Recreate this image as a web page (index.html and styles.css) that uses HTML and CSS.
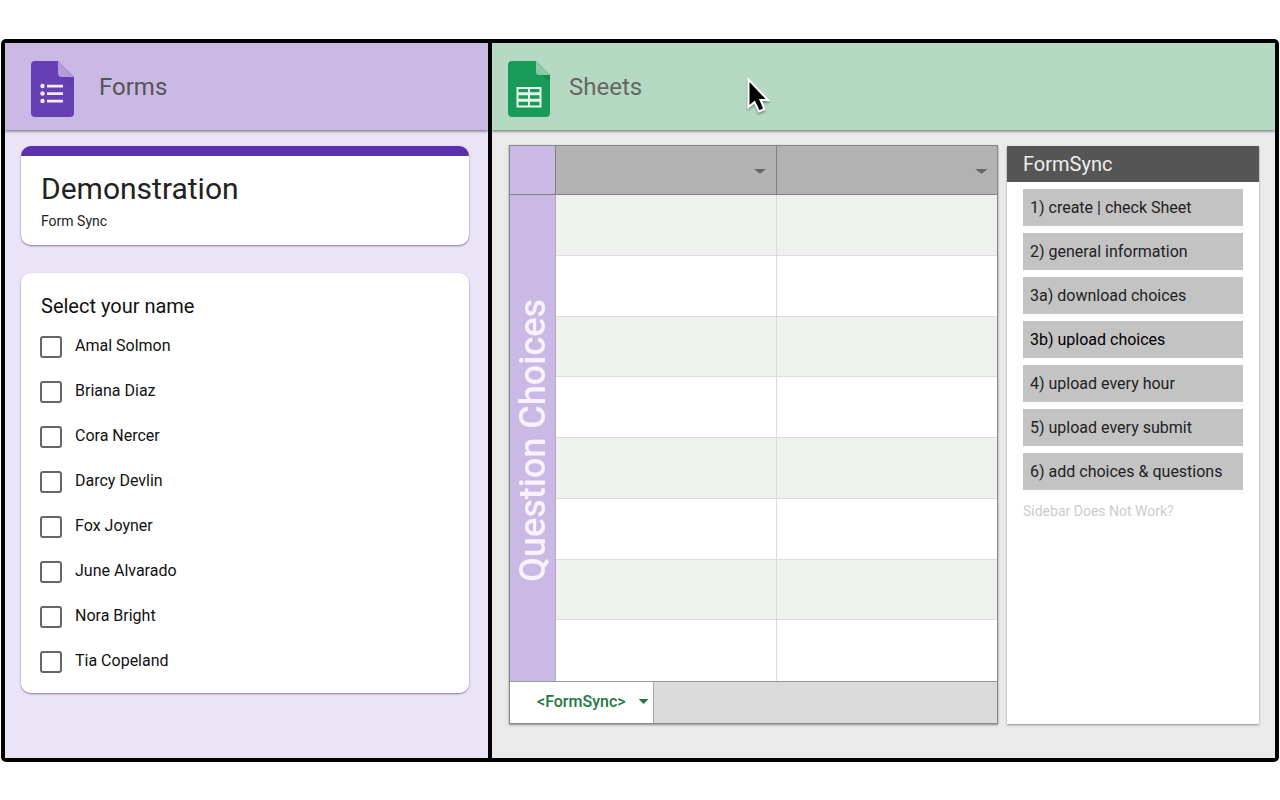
FILE: index.html
```html
<!DOCTYPE html>
<html lang="en">
<head>
  <meta charset="UTF-8">
  <meta name="viewport" content="width=device-width, initial-scale=1.0">
  <title>FormSync</title>
  <link rel="stylesheet" href="styles.css">
</head>
<body>
  <main class="frame">
    <section class="panel forms">
      <header class="panel-header forms-header">
        <svg class="logo" width="43" height="56" viewBox="0 0 43 56" aria-hidden="true">
          <path fill="#673fb4" d="M4 0H27L43 16V52a4 4 0 0 1-4 4H4a4 4 0 0 1-4-4V4a4 4 0 0 1 4-4z"/>
          <path fill="#5a36a0" d="M28 15L43 30V16z" opacity=".3"/>
          <path fill="#b39ddb" d="M27 0L43 16H31a4 4 0 0 1-4-4z"/>
          <g fill="#f1ebfa">
            <circle cx="11.500" cy="25" r="2.200"/>
            <circle cx="11.500" cy="32.500" r="2.200"/>
            <circle cx="11.500" cy="40" r="2.200"/>
            <path d="M16 23.700h16v2.700H16zM16 31.200h16v2.700H16zM16 38.700h16v2.700H16z"/>
          </g>
        </svg>
        <h2>Forms</h2>
      </header>

      <div class="forms-body">
        <div class="card card-title">
          <h1>Demonstration</h1>
          <p>Form Sync</p>
        </div>

        <fieldset class="card card-question">
          <legend>Select your name</legend>
          <label class="choice"><input type="checkbox"><span>Amal Solmon</span></label>
          <label class="choice"><input type="checkbox"><span>Briana Diaz</span></label>
          <label class="choice"><input type="checkbox"><span>Cora Nercer</span></label>
          <label class="choice"><input type="checkbox"><span>Darcy Devlin</span></label>
          <label class="choice"><input type="checkbox"><span>Fox Joyner</span></label>
          <label class="choice"><input type="checkbox"><span>June Alvarado</span></label>
          <label class="choice"><input type="checkbox"><span>Nora Bright</span></label>
          <label class="choice"><input type="checkbox"><span>Tia Copeland</span></label>
        </fieldset>
      </div>
    </section>

    <section class="panel sheets">
      <header class="panel-header sheets-header">
        <svg class="logo" width="42" height="56" viewBox="0 0 42 56" aria-hidden="true">
          <path fill="#189a58" d="M4 0H28L42 14V52a4 4 0 0 1-4 4H4a4 4 0 0 1-4-4V4a4 4 0 0 1 4-4z"/>
          <path fill="#12804a" d="M33 14L42 20V14z" opacity=".7"/>
          <path fill="#8bcaa9" d="M28 0L42 14H31a3 3 0 0 1-3-3z"/>
          <path fill="#e6f4ea" fill-rule="evenodd" d="M8.500 26H33.500V46.500H8.500zM10.500 28V31.300H20V28zM22 28V31.300H31.500V28zM10.500 34.300V37.700H20V34.300zM22 34.300V37.700H31.500V34.300zM10.500 40.700V44.500H20V40.700zM22 40.700V44.500H31.500V40.700z"/>
        </svg>
        <h2>Sheets</h2>
      </header>

      <div class="sheets-body">
        <div class="sheet">
          <table class="grid">
            <colgroup>
              <col class="col-label">
              <col>
              <col>
            </colgroup>
            <thead>
              <tr>
                <th class="corner"></th>
                <th class="column-head"><button class="arrow" aria-label="Column menu"></button></th>
                <th class="column-head"><button class="arrow" aria-label="Column menu"></button></th>
              </tr>
            </thead>
            <tbody>
              <tr>
                <th class="row-label" rowspan="8"><span>Question Choices</span></th>
                <td></td>
                <td></td>
              </tr>
              <tr><td></td><td></td></tr>
              <tr><td></td><td></td></tr>
              <tr><td></td><td></td></tr>
              <tr><td></td><td></td></tr>
              <tr><td></td><td></td></tr>
              <tr><td></td><td></td></tr>
              <tr><td></td><td></td></tr>
            </tbody>
          </table>
          <div class="tabs">
            <button class="tab">&lt;FormSync&gt;</button>
          </div>
        </div>

        <aside class="sidebar">
          <h3>FormSync</h3>
          <nav class="actions">
            <button>1) create | check Sheet</button>
            <button>2) general information</button>
            <button>3a) download choices</button>
            <button class="active">3b) upload choices</button>
            <button>4) upload every hour</button>
            <button>5) upload every submit</button>
            <button>6) add choices &amp; questions</button>
            <a href="#">Sidebar Does Not Work?</a>
          </nav>
        </aside>
      </div>

      <svg class="cursor" width="26" height="40" viewBox="0 0 26 40" aria-hidden="true">
        <path fill="#000" stroke="#fff" stroke-width="2" d="M1.500 2.500V30L7.500 25L12 34.500L17.500 32L13.500 23H21z"/>
      </svg>
    </section>
  </main>
</body>
</html>
```
FILE: styles.css
```css
* {
  box-sizing: border-box;
}

body {
  margin: 0;
  padding: 39px 1px;
  background-color: #fff;
  font-family: Roboto, sans-serif;
  color: #111;
}

h1, h2, h3, p {
  margin: 0;
  font-weight: 400;
}

button {
  border: none;
  font-family: inherit;
  cursor: pointer;
}

.frame {
  display: grid;
  grid-template-columns: 487fr 783fr;
  border: 4px solid #000;
  border-radius: 5px;
}

.panel {
  display: flex;
  flex-direction: column;
  position: relative;
}

.forms {
  border-right: 4px solid #000;
  background-color: #ebe4f7;
}

.sheets {
  background-color: #eaeaea;
}

.panel-header {
  display: flex;
  align-items: center;
  padding: 18px 26px 13px;
  box-shadow: 0 1px 3px rgba(0, 0, 0, 0.6);
}

.panel-header h2 {
  padding-bottom: 4px;
  font-size: 24px;
  line-height: 30px;
}

.forms-header {
  gap: 25px;
  background-color: #cab9e4;
}

.forms-header h2 {
  color: #555;
}

.sheets-header {
  gap: 19px;
  padding-left: 16px;
  background-color: #b5d9c3;
}

.sheets-header h2 {
  color: #666;
}

/* forms */

.forms-body {
  display: flex;
  flex-direction: column;
  gap: 28px;
  padding: 16px 19px 16px 16px;
}

.card {
  margin: 0;
  border: none;
  border-radius: 10px;
  background-color: #fff;
  box-shadow: 0 1px 2px rgba(60, 40, 90, 0.6);
}

.card-title {
  padding: 15px 20px 13px;
  border-top: 10px solid #5a30ad;
}

.card-title h1 {
  font-size: 30px;
  line-height: 36px;
  color: #222;
}

.card-title p {
  margin-top: 4px;
  font-size: 14px;
  line-height: 21px;
  color: #222;
}

.card-question {
  display: flex;
  flex-direction: column;
  padding: 20px 19px 9px;
}

.card-question legend {
  float: left;
  padding: 0 1px;
  font-size: 20px;
  line-height: 26px;
  margin-bottom: 5px;
}

.choice {
  display: flex;
  align-items: center;
  gap: 13px;
  height: 45px;
  font-size: 16px;
}

.choice input {
  appearance: none;
  width: 22px;
  height: 22px;
  margin: 0;
  border: 2px solid #666;
  border-radius: 3px;
}

.choice input:checked {
  background-color: #673fb4;
}

.choice span {
  padding-bottom: 2px;
}

/* sheets */

.sheets-body {
  display: grid;
  grid-template-columns: 489fr 252fr;
  gap: 9px;
  flex: 1;
  padding: 15px 16px 34px 17px;
}

.sheet {
  display: flex;
  flex-direction: column;
  border: 1px solid #888;
  box-shadow: 0 1px 2px rgba(0, 0, 0, 0.4);
}

.grid {
  width: 100%;
  height: 535px;
  table-layout: fixed;
  border-spacing: 0;
  background-color: #fff;
}

.grid th,
.grid td {
  padding: 0;
}

.col-label {
  width: 46px;
}

.grid .corner,
.grid .column-head {
  height: 49px;
  border-right: 1px solid #808080;
  border-bottom: 1px solid #808080;
}

.corner,
.row-label {
  background-color: #cab9e4;
}

.column-head {
  background-color: #b2b2b2;
  text-align: right;
}

.grid .column-head:last-child {
  border-right: none;
}

.arrow {
  width: 13px;
  height: 5px;
  margin-right: 9px;
  padding: 0;
  vertical-align: middle;
  background-color: #666;
  clip-path: polygon(0 0, 100% 0, 50% 100%);
}

.grid .row-label {
  padding-top: 8px;
  border-right: 1px solid #b0a8bd;
}

.row-label span {
  writing-mode: vertical-rl;
  transform: rotate(180deg);
  font-size: 36px;
  font-weight: 500;
  line-height: 44px;
  white-space: nowrap;
  color: #f7f2fc;
}

.grid td {
  height: 60px;
  border-right: 1px solid #dcdcdc;
  border-bottom: 1px solid #dcdcdc;
}

.grid td:last-child {
  border-right: none;
}

.grid tr:last-child td {
  border-bottom: none;
}

.grid tbody tr:nth-child(odd) td {
  background-color: #eff1ee;
}

.tabs {
  display: flex;
  height: 42px;
  border-top: 1px solid #999;
  background-color: #dadada;
}

.tab {
  display: flex;
  align-items: center;
  gap: 13px;
  padding: 0 4px 2px 27px;
  border-right: 1px solid #aaa;
  background-color: #fff;
  color: #23783f;
  font-size: 16px;
  font-weight: 500;
}

.tab::after {
  content: "";
  width: 10px;
  height: 5px;
  background-color: #23783f;
  clip-path: polygon(0 0, 100% 0, 50% 100%);
}

.sidebar {
  margin-top: 1px;
  background-color: #fff;
  box-shadow: 0 1px 2px rgba(0, 0, 0, 0.4);
}

.sidebar h3 {
  padding: 0 16px;
  background-color: #555;
  color: #eee;
  font-size: 20px;
  line-height: 36px;
}

.actions {
  display: flex;
  flex-direction: column;
  gap: 7px;
  padding: 7px 16px;
}

.actions button {
  height: 37px;
  padding: 0 7px 1px;
  background-color: #c4c3c4;
  color: #222;
  font-size: 16px;
  text-align: left;
}

.actions .active {
  color: #000;
}

.actions a {
  margin-top: 4px;
  color: #ccc;
  font-size: 14px;
  line-height: 20px;
  text-decoration: none;
}

.cursor {
  position: absolute;
  top: 34px;
  left: 255px;
  filter: drop-shadow(0 2px 1px rgba(0, 0, 0, 0.3));
}
```
